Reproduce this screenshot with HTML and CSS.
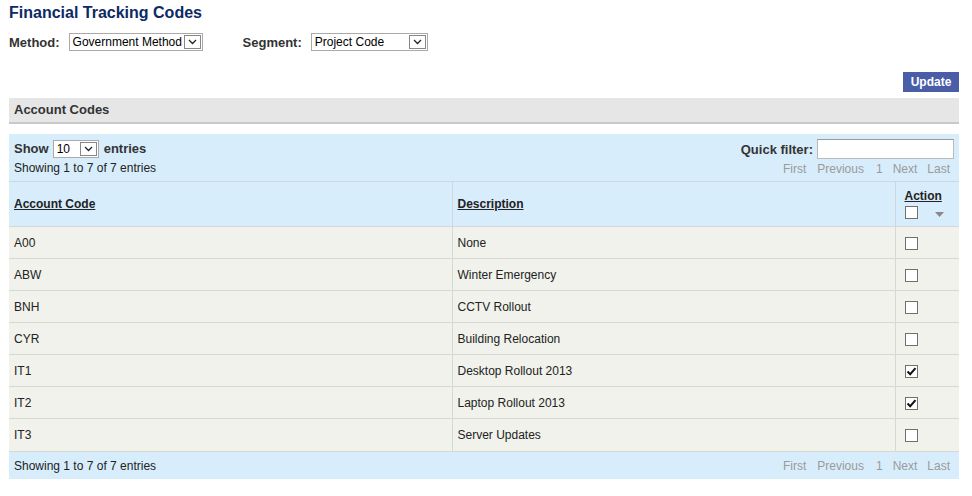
FILE: index.html
```html
<!DOCTYPE html>
<html>
<head>
<meta charset="utf-8">
<link rel="stylesheet" href="styles.css">
</head>
<body>
<div class="page">
  <h1 class="title">Financial Tracking Codes</h1>
  <div class="criteria">
    <span class="lbl">Method:</span>
    <span class="sel sel-method"><span class="sel-text">Government Method</span><span class="sel-btn"><svg width="9" height="6" viewBox="0 0 9 6"><path d="M1 1 L4.5 4.5 L8 1" fill="none" stroke="#222" stroke-width="1.3"/></svg></span></span>
    <span class="lbl lbl-seg">Segment:</span>
    <span class="sel sel-seg"><span class="sel-text">Project Code</span><span class="sel-btn"><svg width="9" height="6" viewBox="0 0 9 6"><path d="M1 1 L4.5 4.5 L8 1" fill="none" stroke="#222" stroke-width="1.3"/></svg></span></span>
  </div>
  <div class="actions"><span class="btn">Update</span></div>
  <div class="section">Account Codes</div>
  <div class="grid">
    <div class="tools">
      <div class="tools-left">
        <div class="show"><b>Show</b><span class="sel sel-len"><span class="sel-text">10</span><span class="sel-btn"><svg width="9" height="6" viewBox="0 0 9 6"><path d="M1 1 L4.5 4.5 L8 1" fill="none" stroke="#222" stroke-width="1.3"/></svg></span></span><b>entries</b></div>
        <div class="info">Showing 1 to 7 of 7 entries</div>
      </div>
      <div class="tools-right">
        <div class="filter"><b>Quick filter:</b><span class="input"></span></div>
        <div class="pager"><span>First</span><span>Previous</span><span>1</span><span>Next</span><span>Last</span></div>
      </div>
    </div>
    <table class="tbl">
      <thead>
        <tr>
          <th class="c1"><u>Account Code</u></th>
          <th class="c2"><u>Description</u></th>
          <th class="c3"><div class="act"><u>Action</u></div><div class="act-ctl"><span class="cb"></span><svg class="tri" width="9" height="5" viewBox="0 0 9 5"><path d="M0 0 H9 L4.5 5 Z" fill="#888"/></svg></div></th>
        </tr>
      </thead>
      <tbody>
        <tr><td>A00</td><td>None</td><td class="c3"><span class="cb"></span></td></tr>
        <tr><td>ABW</td><td>Winter Emergency</td><td class="c3"><span class="cb"></span></td></tr>
        <tr><td>BNH</td><td>CCTV Rollout</td><td class="c3"><span class="cb"></span></td></tr>
        <tr><td>CYR</td><td>Building Relocation</td><td class="c3"><span class="cb"></span></td></tr>
        <tr><td>IT1</td><td>Desktop Rollout 2013</td><td class="c3"><span class="cb"><svg width="11" height="11" viewBox="0 0 11 11"><path d="M1.5 5.5 L4.2 8.2 L9.5 2.2" fill="none" stroke="#111" stroke-width="2"/></svg></span></td></tr>
        <tr><td>IT2</td><td>Laptop Rollout 2013</td><td class="c3"><span class="cb"><svg width="11" height="11" viewBox="0 0 11 11"><path d="M1.5 5.5 L4.2 8.2 L9.5 2.2" fill="none" stroke="#111" stroke-width="2"/></svg></span></td></tr>
        <tr><td>IT3</td><td>Server Updates</td><td class="c3"><span class="cb"></span></td></tr>
      </tbody>
    </table>
    <div class="foot">
      <div class="info">Showing 1 to 7 of 7 entries</div>
      <div class="pager"><span>First</span><span>Previous</span><span>1</span><span>Next</span><span>Last</span></div>
    </div>
  </div>
</div>
</body>
</html>
```

FILE: styles.css
```css
* { box-sizing: border-box; }
body {
  margin: 0;
  font-family: "Liberation Sans", Arial, sans-serif;
  font-size: 12px;
  color: #222;
  background: #fff;
}
.page {
  width: 950px;
  margin-left: 9px;
  padding-top: 3px;
}
.title {
  margin: 0;
  font-size: 16px;
  line-height: 19px;
  font-weight: bold;
  color: #0b2a66;
}
.criteria {
  display: flex;
  align-items: center;
  margin-top: 11px;
  height: 18px;
}
.lbl {
  font-size: 13px;
  font-weight: bold;
  color: #333;
  margin-right: 9px;
}
.lbl-seg { margin-left: 40px; margin-right: 9px; }
.sel {
  display: inline-flex;
  align-items: center;
  height: 18px;
  border: 1px solid #aaa;
  background: #fff;
  font-size: 12px;
  color: #000;
  padding-left: 3px;
  justify-content: space-between;
}
.sel-btn {
  width: 17px;
  height: 14px;
  border: 1px solid #888;
  margin-right: 1px;
  display: inline-flex;
  align-items: center;
  justify-content: center;
  background: #fff;
}
.sel-method { width: 134px; }
.sel-seg { width: 117px; }
.actions {
  display: flex;
  justify-content: flex-end;
  margin-top: 21px;
}
.btn {
  display: inline-block;
  width: 56px;
  height: 20px;
  line-height: 20px;
  text-align: center;
  background: #4a5ea8;
  color: #fff;
  font-weight: bold;
  font-size: 12px;
}
.section {
  margin-top: 6px;
  height: 26px;
  line-height: 24px;
  background: #e6e6e6;
  border-bottom: 2px solid #c9c9c9;
  padding-left: 5px;
  font-weight: bold;
  font-size: 13px;
  color: #333;
}
.grid {
  margin-top: 10px;
  background: #d8edfb;
}
.tools {
  display: flex;
  justify-content: space-between;
  padding: 5px 5px 0 5px;
  height: 47px;
}
.show {
  display: flex;
  align-items: center;
  height: 18px;
  font-size: 13px;
  color: #333;
  padding-top: 1px;
}
.sel-len { width: 46px; margin: 0 5px 0 4px; }
.info {
  margin-top: 4px;
  font-size: 12px;
  color: #222;
}
.tools-right {
  display: flex;
  flex-direction: column;
  align-items: flex-end;
}
.filter {
  display: flex;
  align-items: center;
  height: 19px;
  font-size: 13px;
  color: #333;
  padding-top: 1px;
}
.input {
  display: inline-block;
  width: 137px;
  height: 20px;
  margin-left: 4px;
  background: #fff;
  border: 1px solid #bbb;
  border-top-color: #999;
}
.pager {
  display: flex;
  gap: 10px;
  color: #9a9a9a;
  font-size: 12px;
  margin-top: 4px;
  padding-right: 4px;
}
.pager span:nth-child(1) { margin-right: 1px; }
.pager span:nth-child(3) { margin-left: 2px; }
.tbl {
  width: 100%;
  border-collapse: collapse;
  font-size: 12px;
}
.tbl th {
  background: #d8edfb;
  text-align: left;
  font-weight: bold;
  color: #222;
  height: 45px;
  padding: 0 5px;
  border-top: 1px solid #cfd6dc;
  border-right: 1px solid #cfd6dc;
  vertical-align: middle;
}
.tbl th u, .act u { text-decoration: underline; }
.tbl td {
  background: #f0f2eb;
  height: 32px;
  padding: 0 5px;
  border-top: 1px solid #d6d8d3;
  border-right: 1px solid #d6d8d3;
  color: #222;
}
.tbl tr > :last-child { border-right: none; }
.c1 { width: 443px; }
.c2 { width: 443px; }
.tbl .c3 { width: 64px; padding-left: 9px; }
.act { line-height: 14px; }
.act-ctl {
  display: flex;
  align-items: center;
  margin-top: 3px;
  height: 14px;
}
.tri { margin-left: 17px; margin-top: 4px; }
.cb {
  display: inline-flex;
  align-items: center;
  justify-content: center;
  width: 13px;
  height: 13px;
  border: 1px solid #707070;
  background: #fff;
  vertical-align: middle;
}
.foot {
  display: flex;
  justify-content: space-between;
  align-items: center;
  height: 28px;
  padding: 1px 5px 0;
  border-top: 1px solid #d6d8d3;
}
.foot .info { margin-top: 0; }
.foot .pager { margin-top: 0; }
```
